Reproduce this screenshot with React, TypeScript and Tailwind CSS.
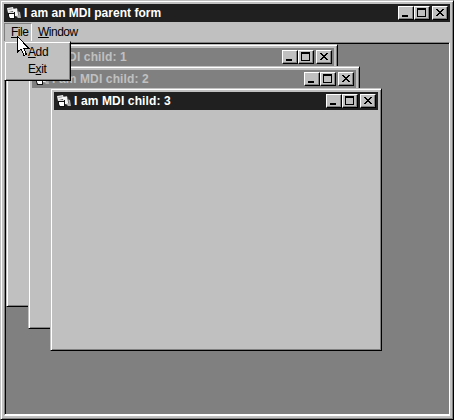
import type { ReactNode } from "react";

const raised =
  "border border-t-[#c0c0c0] border-l-[#c0c0c0] border-r-black border-b-black shadow-[inset_1px_1px_0_#fff,inset_-1px_-1px_0_#808080]";

function FormIcon() {
  return (
    <svg width="16" height="14" viewBox="0 0 16 14" className="shrink-0">
      <path d="M1 2l6-1 1 4-5 1-1 1z" fill="#eee" />
      <path d="M2.500 3.500l4-.7" stroke="#888" strokeWidth=".7" />
      <path d="M10 5l4 1 1 6-3 0-2-2z" fill="#b0b0b0" />
      <path d="M6 3l5-.8 1.500 7-3.500 1z" fill="#f4f4f4" />
      <path d="M11.500 3l1.200 6.500" stroke="#666" strokeWidth=".8" />
      <path d="M2 6h7v7H3L2 9z" fill="#101010" />
      <path d="M3 8h5v4H4L3 10z" fill="#fff" />
      <path d="M2 6h6v1H2z" fill="#d8d8d8" />
    </svg>
  );
}

function CaptionButton({ children, className = "" }: { children: ReactNode; className?: string }) {
  return (
    <button
      className={
        "block h-[14px] w-4 shrink-0 border border-t-white border-l-white border-r-black border-b-black bg-[#c0c0c0] shadow-[inset_-1px_-1px_0_#808080] " +
        className
      }
    >
      <svg width="14" height="12" viewBox="0 0 14 12" shapeRendering="crispEdges" className="block">
        {children}
      </svg>
    </button>
  );
}

function TitleBar({ title, active, tracking }: { title: string; active: boolean; tracking: string }) {
  return (
    <div className={"flex h-[18px] shrink-0 items-center px-[2px] " + (active ? "bg-[#202020]" : "bg-[#808080]")}>
      <FormIcon />
      <span
        className={
          "ml-[2px] flex-1 text-[12px] leading-[18px] font-bold whitespace-pre " +
          tracking +
          (active ? " text-white" : " text-[#c0c0c0]")
        }
      >
        {title}
      </span>
      <CaptionButton>
        <path d="M3 8h6v2H3z" />
      </CaptionButton>
      <CaptionButton>
        <path fillRule="evenodd" d="M2 1h9v9H2zM3 3v6h7V3z" />
      </CaptionButton>
      <CaptionButton className="ml-[2px]">
        <path d="M3 2h2v1h1v1h2V3h1V2h2v1h-1v1H9v1H8v1h1v1h1v1h1v1H9V8H8V7H6v1H5v1H3V8h1V7h1V6h1V5H5V4H4V3H3z" />
      </CaptionButton>
    </div>
  );
}

function ChildWindow({ title, active = false, place }: { title: string; active?: boolean; place: string }) {
  return (
    <section className={"absolute h-[263px] w-[332px] bg-[#c0c0c0] p-[3px] " + raised + " " + place}>
      <TitleBar title={title} active={active} tracking="tracking-[0.13px]" />
    </section>
  );
}

export default function App() {
  return (
    <main
      className={"relative flex h-[420px] w-[454px] flex-col bg-[#c0c0c0] p-[3px] text-black " + raised}
      style={{ fontFamily: '"Liberation Sans", Arial, sans-serif' }}
    >
      <TitleBar title="I am an MDI parent form" active tracking="tracking-[0.02px]" />
      <nav className="flex h-5 shrink-0 pt-px text-[12px] leading-[18px]">
        <div className="h-[19px] w-7 border-t border-r border-l border-t-[#808080] border-r-white border-l-[#808080] pl-[6px] leading-[17px] tracking-[-0.5px]">
          <u>F</u>ile
        </div>
        <div className="ml-[6px] leading-[19px] tracking-[-0.5px]">
          <u>W</u>indow
        </div>
      </nav>
      <div className="relative flex-1 overflow-hidden border border-t-[#808080] border-l-[#808080] border-r-white border-b-2 border-b-white bg-[#808080] shadow-[inset_1px_1px_0_#000]">
        <ChildWindow title="I am MDI child: 1" place="top-px left-px" />
        <ChildWindow title="I am MDI child: 2" place="top-[23px] left-[23px]" />
        <ChildWindow title="I am MDI child: 3" active place="top-[45px] left-[45px]" />
      </div>
      <div
        className={
          "absolute top-[40px] left-[3px] h-10 w-[67px] bg-[#c0c0c0] pt-[2px] pl-[23px] text-[12px] leading-[17px] tracking-[-0.4px] " +
          raised
        }
      >
        <div><u>A</u>dd</div>
        <div>E<u>x</u>it</div>
      </div>
      <svg className="absolute top-[35px] left-[16px]" width="13" height="21" viewBox="0 0 13 21" shapeRendering="crispEdges">
        <path d="M.5.5v15.500l3.500-3 3 6.500 2.500-1-3-6.500h5z" fill="#fff" stroke="#000" />
      </svg>
    </main>
  );
}
